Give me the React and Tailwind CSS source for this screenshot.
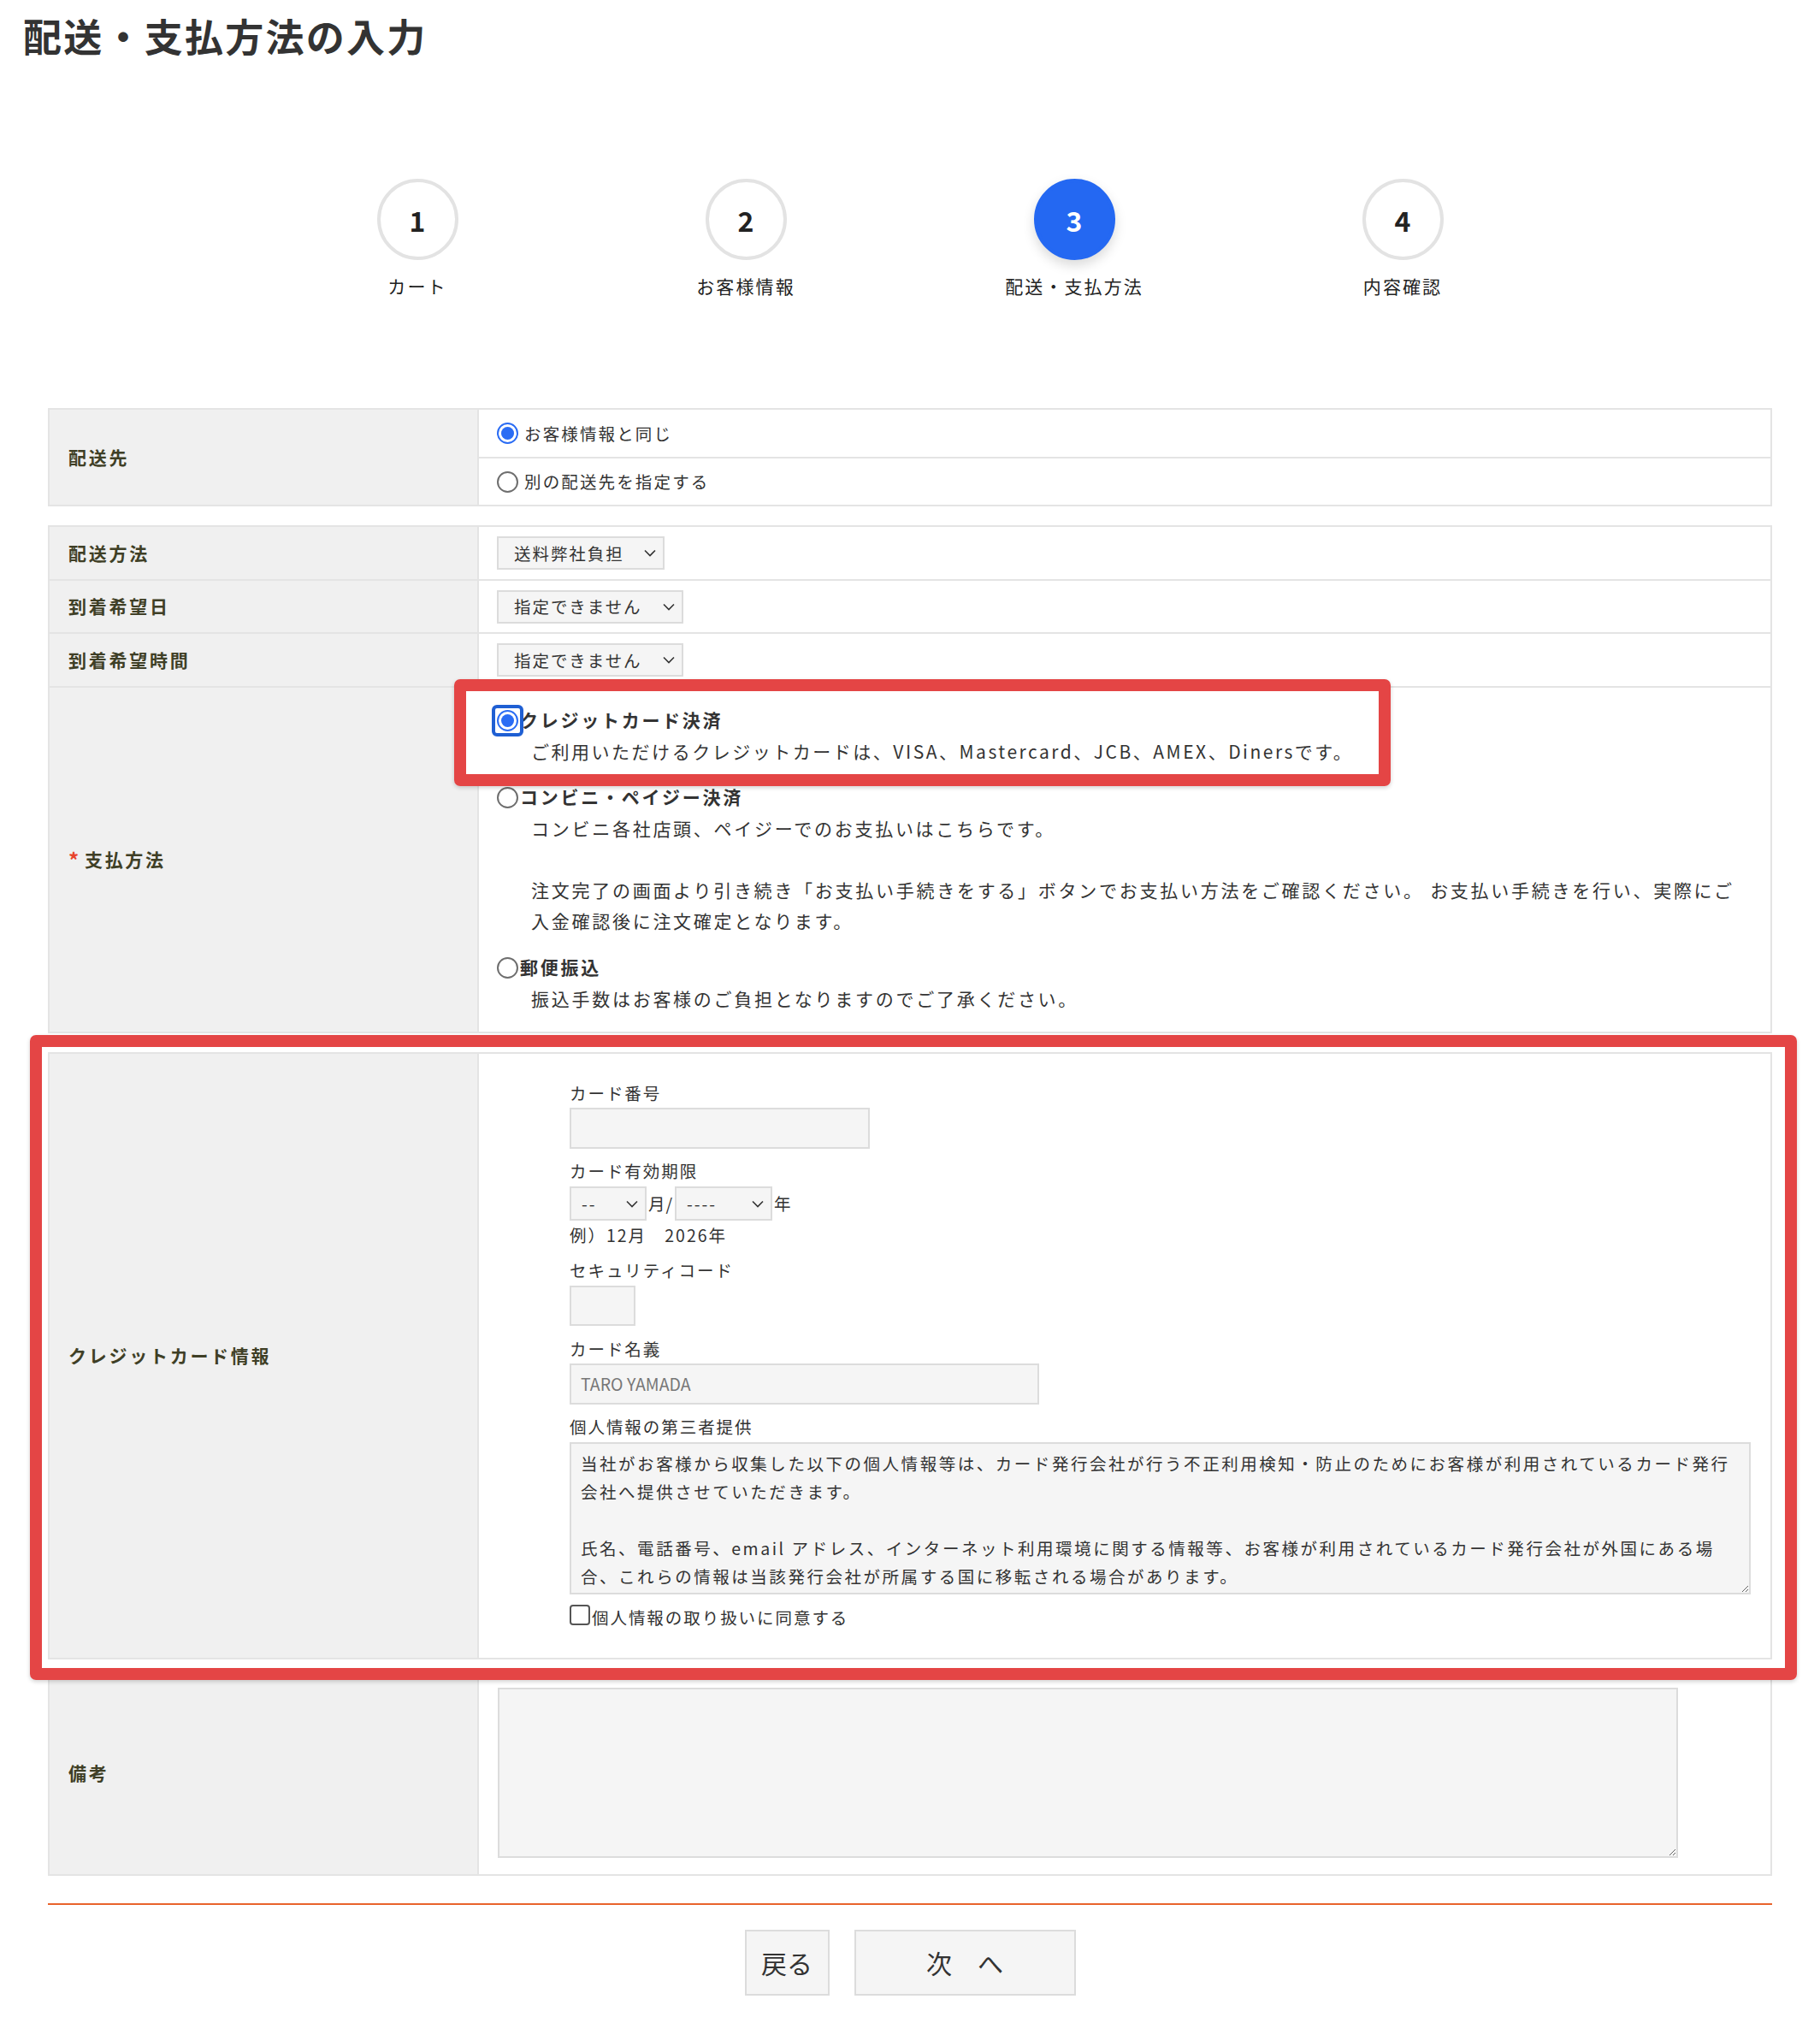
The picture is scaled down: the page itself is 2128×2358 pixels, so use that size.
import React from "react";

const steps = [
  { num: 1, label: "カート" },
  { num: 2, label: "お客様情報" },
  { num: 3, label: "配送・支払方法", active: true },
  { num: 4, label: "内容確認" },
];

const Chevron = () => (
  <svg width="14" height="9" viewBox="0 0 14 9" fill="none">
    <path d="M1 1.5l6 6 6-6" stroke="#333" strokeWidth="1.6" />
  </svg>
);

const Radio = ({ checked }) =>
  checked ? (
    <span className="flex h-[25px] w-[25px] shrink-0 items-center justify-center rounded-full border-2 border-[#2a6cf4] bg-white">
      <span className="h-[15px] w-[15px] rounded-full bg-[#2a6cf4]" />
    </span>
  ) : (
    <span className="h-[25px] w-[25px] shrink-0 rounded-full border-2 border-[#6e6e6e] bg-white" />
  );

const Th = ({ children }) => (
  <div className="flex w-[502px] shrink-0 items-center border-r-2 border-[#e4e4e4] bg-[#f0f0f0] pl-[22px] text-[21px] font-bold tracking-[0.13em] text-[#3f3f26]">
    {children}
  </div>
);

const Select = ({ value, className }) => (
  <div
    className={`flex items-center justify-between border-2 border-[#dcdcdc] bg-[#f5f5f5] text-[19.5px] tracking-[0.1em] text-[#333] ${className}`}
  >
    <span>{value}</span>
    <Chevron />
  </div>
);

const FieldLabel = ({ children, className }) => (
  <div className={`text-[19.5px] leading-[33px] tracking-[0.1em] text-[#333] ${className}`}>{children}</div>
);

const App = () => {
  return (
    <div className="relative min-h-[2358px] w-[2128px] bg-white font-['Noto_Sans_CJK_JP','Noto_Sans',sans-serif] text-[#333]">
      <h1 className="pl-[27px] pt-[12px] text-[45px] font-bold leading-[60px] tracking-[0.05em] text-[#333]">
        配送・支払方法の入力
      </h1>

      {/* steps */}
      <div className="mt-[137px] flex justify-center">
        {steps.map((s) => (
          <div key={s.num} className="flex w-[384px] flex-col items-center">
            <div
              className={
                s.active
                  ? "flex h-[95px] w-[95px] items-center justify-center rounded-full border-4 border-[#2468f2] bg-[#2468f2] text-[32px] font-bold text-white shadow-[0_6px_14px_rgba(0,0,0,0.15)]"
                  : "flex h-[95px] w-[95px] items-center justify-center rounded-full border-4 border-[#e3e3e3] bg-white text-[32px] font-bold text-[#222]"
              }
            >
              {s.num}
            </div>
            <div className="mt-[14px] text-[21px] leading-[32px] tracking-[0.1em] text-[#222]">{s.label}</div>
          </div>
        ))}
      </div>

      <div className="mt-[127px] px-[56px]">
        {/* 配送先 */}
        <div className="flex border-2 border-[#e4e4e4]">
          <Th>配送先</Th>
          <div className="flex-1 text-[19.5px] tracking-[0.11em]">
            <div className="flex h-[57px] items-center gap-[7px] border-b-2 border-[#e4e4e4] pl-[21px]">
              <Radio checked />
              <span>お客様情報と同じ</span>
            </div>
            <div className="flex h-[54px] items-center gap-[7px] pl-[21px]">
              <Radio />
              <span>別の配送先を指定する</span>
            </div>
          </div>
        </div>

        {/* 配送方法〜支払方法 */}
        <div className="mt-[22px] border-2 border-[#e4e4e4]">
          <div className="flex h-[61px]">
            <Th>配送方法</Th>
            <div className="flex flex-1 items-center pl-[21px]">
              <Select value="送料弊社負担" className="h-[39px] w-[196px] pl-[18px] pr-[8px]" />
            </div>
          </div>
          <div className="flex h-[62px] border-t-2 border-[#e4e4e4]">
            <Th>到着希望日</Th>
            <div className="flex flex-1 items-center pl-[21px]">
              <Select value="指定できません" className="h-[39px] w-[218px] pl-[18px] pr-[8px]" />
            </div>
          </div>
          <div className="flex h-[63px] border-t-2 border-[#e4e4e4]">
            <Th>到着希望時間</Th>
            <div className="flex flex-1 items-center pl-[21px]">
              <Select value="指定できません" className="h-[39px] w-[218px] pl-[18px] pr-[8px]" />
            </div>
          </div>
          <div className="flex border-t-2 border-[#e4e4e4]">
            <Th>
              <span className="mr-[4px] text-[24px] text-[#e8432b]">*</span>支払方法
            </Th>
            <div className="flex flex-1 flex-col gap-[18px] pb-[21px] pl-[21px] pt-[20px] text-[21px] tracking-[0.13em] text-[#333]">
              <div>
                <div className="flex h-[36px] items-center">
                  <span className="relative">
                    <Radio checked />
                    <span className="absolute -inset-[6px] rounded-[6px] border-4 border-[#1f5fd3]" />
                  </span>
                  <span className="ml-[2px] font-bold">クレジットカード決済</span>
                </div>
                <div className="whitespace-nowrap pl-[40px] leading-[36px] tracking-[0.12em]">
                  ご利用いただけるクレジットカードは、VISA、Mastercard、JCB、AMEX、Dinersです。
                </div>
              </div>
              <div>
                <div className="flex h-[36px] items-center">
                  <Radio />
                  <span className="ml-[2px] font-bold">コンビニ・ペイジー決済</span>
                </div>
                <div className="whitespace-nowrap pl-[40px] leading-[36px]">
                  コンビニ各社店頭、ペイジーでのお支払いはこちらです。
                  <br />
                  <br />
                  注文完了の画面より引き続き「お支払い手続きをする」ボタンでお支払い方法をご確認ください。 お支払い手続きを行い、実際にご
                  <br />
                  入金確認後に注文確定となります。
                </div>
              </div>
              <div className="mt-[1px]">
                <div className="flex h-[36px] items-center">
                  <Radio />
                  <span className="ml-[2px] font-bold">郵便振込</span>
                </div>
                <div className="whitespace-nowrap pl-[40px] leading-[36px]">
                  振込手数はお客様のご負担となりますのでご了承ください。
                </div>
              </div>
            </div>
          </div>
        </div>

        {/* クレジットカード情報 */}
        <div className="mt-[22px] flex border-2 border-[#e4e4e4]">
          <Th>クレジットカード情報</Th>
          <div className="flex-1 pb-[31px] pl-[106px] pt-[29px]">
            <FieldLabel>カード番号</FieldLabel>
            <div className="mt-[1px] h-[48px] w-[351px] border-2 border-[#dcdcdc] bg-[#f5f5f5]" />
            <FieldLabel className="mt-[9px]">カード有効期限</FieldLabel>
            <div className="mt-[2px] flex items-center text-[19.5px] tracking-[0.05em]">
              <Select value="--" className="h-[40px] w-[90px] pl-[12px] pr-[8px]" />
              <span className="mx-[2px]">月/</span>
              <Select value="----" className="h-[40px] w-[114px] pl-[12px] pr-[8px]" />
              <span className="ml-[2px]">年</span>
            </div>
            <FieldLabel>例）12月　2026年</FieldLabel>
            <FieldLabel className="mt-[8px]">セキュリティコード</FieldLabel>
            <div className="mt-[2px] h-[47px] w-[77px] border-2 border-[#dcdcdc] bg-[#f5f5f5]" />
            <FieldLabel className="mt-[10px]">カード名義</FieldLabel>
            <div className="mt-[1px] flex h-[48px] w-[549px] items-center border-2 border-[#dcdcdc] bg-[#f5f5f5] pl-[11px] text-[19.5px] text-[#777]">
              TARO YAMADA
            </div>
            <FieldLabel className="mt-[9px]">個人情報の第三者提供</FieldLabel>
            <textarea
              readOnly
              wrap="off"
              className="mt-[2px] block h-[178px] w-[1381px] resize-y overflow-hidden border-2 border-[#dcdcdc] bg-[#f5f5f5] px-[11px] pt-[6px] text-[19.5px] leading-[33px] tracking-[0.13em] text-[#333] outline-none"
              value={
                "当社がお客様から収集した以下の個人情報等は、カード発行会社が行う不正利用検知・防止のためにお客様が利用されているカード発行\n会社へ提供させていただきます。\n\n氏名、電話番号、email アドレス、インターネット利用環境に関する情報等、お客様が利用されているカード発行会社が外国にある場\n合、これらの情報は当該発行会社が所属する国に移転される場合があります。"
              }
            />
            <div className="mt-[10px] flex h-[33px] items-start">
              <span className="mt-[2px] h-[24px] w-[24px] shrink-0 rounded-[4px] border-2 border-[#555] bg-white" />
              <span className="ml-[2px] text-[19.5px] leading-[33px] tracking-[0.1em]">個人情報の取り扱いに同意する</span>
            </div>
          </div>
        </div>

        {/* 備考 */}
        <div className="mt-[12px] flex border-2 border-[#e4e4e4]">
          <Th>備考</Th>
          <div className="flex-1 pb-[19px] pl-[22px] pt-[19px]">
            <textarea
              readOnly
              className="block h-[199px] w-[1380px] resize-y border-2 border-[#dcdcdc] bg-[#f5f5f5] outline-none"
            />
          </div>
        </div>

        <div className="mt-[32px] h-[2px] bg-[#e9632c]" />
      </div>

      {/* buttons */}
      <div className="mt-[29px] flex justify-center gap-[29px] pb-[25px]">
        <button className="h-[77px] w-[99px] border-2 border-[#dcdcdc] bg-[#f5f5f5] text-[30px] text-[#333]">
          戻る
        </button>
        <button className="h-[77px] w-[259px] border-2 border-[#dcdcdc] bg-[#f5f5f5] text-[30px] text-[#333]">
          次　へ
        </button>
      </div>

      {/* annotation boxes */}
      <div className="pointer-events-none absolute left-[531px] top-[794px] h-[125px] w-[1095px] rounded-[7px] border-[14px] border-[#e44545] shadow-[inset_15px_0_0_0_#fff,0_2px_5px_rgba(0,0,0,0.18)]" />
      <div className="pointer-events-none absolute left-[35px] top-[1210px] h-[754px] w-[2066px] rounded-[7px] border-[14px] border-[#e44545] shadow-[inset_0_0_0_6px_#fff,0_2px_5px_rgba(0,0,0,0.18)]" />
    </div>
  );
};

export default App;
